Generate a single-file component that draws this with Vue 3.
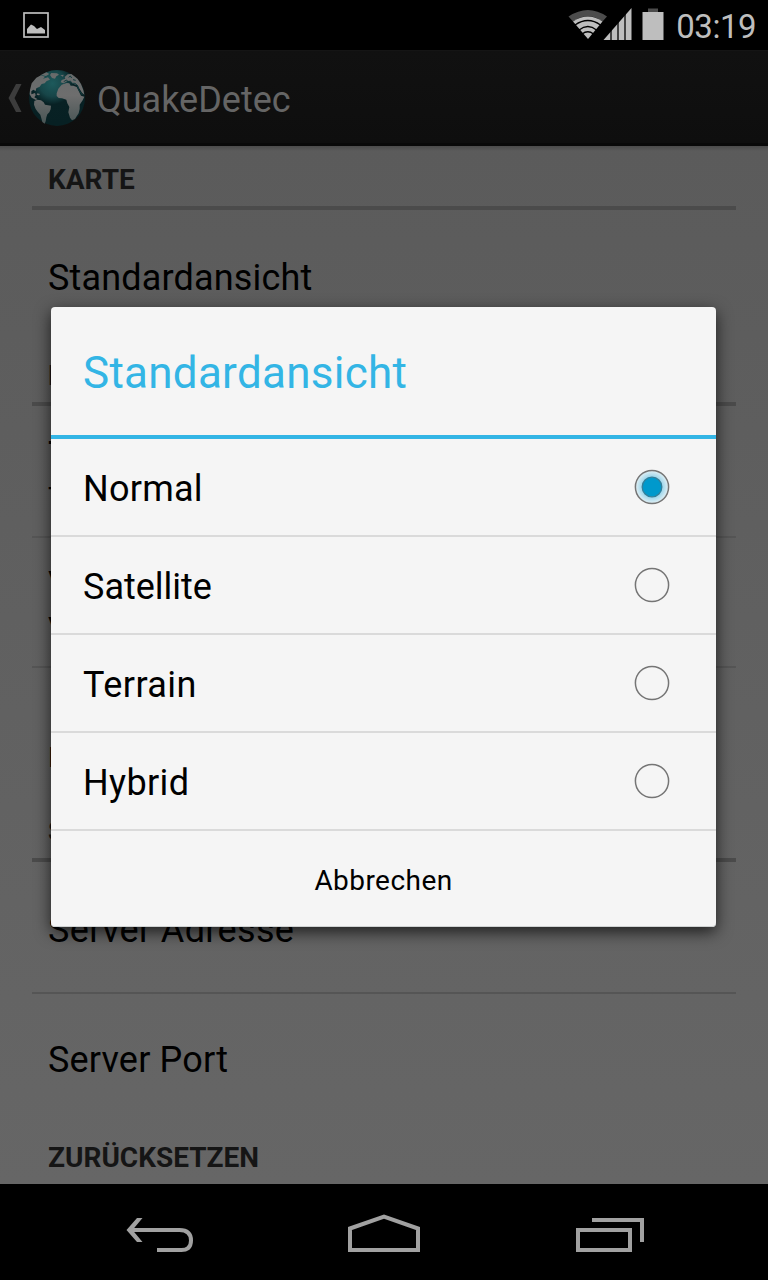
<script setup>
import { ref } from 'vue'

const options = ['Normal', 'Satellite', 'Terrain', 'Hybrid']
const selected = ref('Normal')

const sections = [
  { title: 'Karte', items: [{ title: 'Standardansicht' }] },
  {
    title: 'B',
    items: [
      { title: 'T', sub: 'T' },
      { title: 'V', sub: 'V' },
      { title: '\u00a0', sub: 'M' },
    ],
  },
  { title: 'S', items: [{ title: 'Server Adresse', wide: true }, { title: 'Server Port' }] },
  { title: 'Zurücksetzen', items: [] },
]
</script>

<template>
  <div class="screen">
    <header class="status">
      <svg class="picture" width="26" height="26" viewBox="0 0 26 26">
        <rect x="1" y="1" width="24" height="24" fill="none" stroke="#bebebe" stroke-width="1.700" />
        <path d="M4 21.500V17L8 12.500L11 14L14 17L18 15L22 18V21.500Z" fill="#bebebe" />
      </svg>
      <div class="indicators">
        <svg width="96" height="34" viewBox="0 0 96 34">
          <path d="M0.500 9.500Q20 -3.500 39 9.500L34.500 14.500Q20 4 5 14.500Z" fill="#4c4c4c" />
          <path d="M5 14.500Q20 4.500 34.500 14.500L20 32Z" fill="#bebebe" />
          <path d="M7 18Q20 9 32.500 18M11 23Q20 16 28.500 23M14 27Q20 22.500 25.500 27" fill="none" stroke="#000" stroke-width="1.300" />
          <path d="M35.500 33L63.500 1V33Z" fill="#bebebe" />
          <path d="M43 1V33M50 1V33M57 1V33" stroke="#000" stroke-width="1.300" />
          <path d="M80 1.500H90V5H80Z" fill="#4c4c4c" />
          <path d="M74.500 5H95.500V33H74.500Z" fill="#bebebe" />
        </svg>
        <span class="clock">03:19</span>
      </div>
    </header>

    <div class="actionbar">
      <svg class="up" width="14" height="28" viewBox="0 0 14 28">
        <path d="M8 0H13.500L6.500 14L13.500 28H8L0.500 14Z" fill="#3c3c3c" />
      </svg>
      <svg class="globe" width="56" height="56" viewBox="86 210 168 168">
        <defs>
          <radialGradient id="sea" cx="0.42" cy="0.24" r="0.72">
            <stop offset="0" stop-color="#1d5a5c" />
            <stop offset="0.32" stop-color="#174548" />
            <stop offset="0.52" stop-color="#082124" />
            <stop offset="1" stop-color="#072023" />
          </radialGradient>
          <linearGradient id="land" x1="0" y1="210" x2="0" y2="378" gradientUnits="userSpaceOnUse">
            <stop offset="0" stop-color="#666a6a" />
            <stop offset="0.45" stop-color="#6e6e6e" />
            <stop offset="1" stop-color="#465353" />
          </linearGradient>
        </defs>
        <circle cx="170" cy="294" r="84" fill="url(#sea)" />
        <g fill="url(#land)">
          <path d="M89 270L94 250L108 233L122 226L134 230L128 236L143 232L149 239L139 243L133 250L124 252L118 260L108 265L106 273L99 269L93 274L93 283L104 279L106 286L102 292L111 297L107 300L94 293L88 283Z" />
          <path d="M122 225L138 217L147 222L137 228ZM149 225L153 219L170 220L176 224L168 229L164 236L155 234ZM180 226L190 224L188 230ZM111 280L119 282L116 286L109 284Z" />
          <path d="M102 303L111 299L122 301L130 307L134 314L152 317L151 328L147 337L141 343L138 352L136 364L133 371L126 366L123 355L120 344L112 335L106 327L101 314Z" />
          <path d="M169 280L174 266L184 254L199 249L207 250L211 257L219 257L229 261L235 273L242 287L252 290L247 301L238 314L238 327L235 340L228 350L224 357L215 361L209 353L204 337L207 321L201 310L198 299L185 295L175 294L169 288Z" />
          <path d="M181 247L184 240L195 236L193 231L202 223L213 222L222 229L232 237L242 252L249 270L252 284L245 278L236 264L232 255L222 253L213 248L208 242L201 243L196 246L190 250Z" />
        </g>
        <path d="M190 245L199 240L204 247L210 243L216 250L224 250L231 256L235 269L246 285M205 232L210 228L214 234M218 239L226 241" fill="none" stroke="#123b3e" stroke-width="3" />
      </svg>
      <span class="app-name">QuakeDetec</span>
    </div>

    <main class="prefs">
      <section v-for="s in sections" :key="s.title" class="category">
        <h2>{{ s.title }}</h2>
        <div v-for="item in s.items" :key="item.title" class="pref">
          <div class="pref-title" :class="{ wide: item.wide }">{{ item.title }}</div>
          <div v-if="item.sub" class="pref-sub">{{ item.sub }}</div>
        </div>
      </section>
    </main>

    <nav class="navbar">
      <svg width="768" height="96" viewBox="0 0 768 96">
        <g fill="none" stroke="#a1a1a1" stroke-width="4">
          <path d="M130 46H179.500Q191 46 191 56.500T179.500 66H157" />
          <path d="M350 44.500L384 32.500L418 44.500V66H350Z" />
          <path d="M578 46H630V66H578ZM592 36H642V58" />
        </g>
        <path d="M137 34H142.500L132.500 46L142.500 58H137L126.500 46Z" fill="#a1a1a1" />
      </svg>
    </nav>

    <div class="dialog" role="dialog">
      <h1>Standardansicht</h1>
      <div v-for="o in options" :key="o" class="option" @click="selected = o">
        <span :class="o.toLowerCase()">{{ o }}</span>
        <svg width="36" height="36" viewBox="0 0 36 36">
          <defs>
            <radialGradient id="glow">
              <stop offset="0.55" stop-color="#92d2ea" />
              <stop offset="1" stop-color="#e4f0f4" />
            </radialGradient>
          </defs>
          <circle cx="18" cy="18" r="16.600" :fill="selected === o ? 'url(#glow)' : 'none'" stroke="#757575" stroke-width="1.500" />
          <circle v-if="selected === o" cx="18" cy="18" r="9.800" fill="#0099cc" stroke="#347f99" stroke-width="1.300" />
        </svg>
      </div>
      <button type="button">Abbrechen</button>
    </div>
  </div>
</template>

<style>
body { margin: 0; background: #000; }
</style>

<style scoped>
.screen {
  position: relative;
  width: 768px;
  height: 1280px;
  display: flex;
  flex-direction: column;
  overflow: hidden;
  background: #000;
  font-family: Roboto, "Liberation Sans", sans-serif;
  color: #000;
}
.status {
  height: 50px;
  flex: none;
  display: flex;
  justify-content: space-between;
  box-sizing: border-box;
  padding: 0 12px 0 23px;
}
.picture { margin-top: 12px; }
.indicators { display: flex; gap: 12px; padding-top: 7px; }
.clock { font-size: 33px; line-height: 39px; color: #bebebe; letter-spacing: -0.500px; }
.actionbar {
  height: 96px;
  flex: none;
  box-sizing: border-box;
  display: flex;
  align-items: center;
  padding: 2px 0 0 8px;
  border-top: 1px solid #151515;
  border-bottom: 3px solid #090909;
  background: linear-gradient(#111, #0e0e0e);
}
.globe { margin-left: 6.500px; }
.app-name { margin-left: 12.500px; padding-top: 3px; font-size: 36px; color: #656565; }
.prefs {
  height: 1038px;
  flex: none;
  overflow: hidden;
  box-sizing: border-box;
  padding: 0 32px;
  background: linear-gradient(#4b4b4b, transparent 5px), linear-gradient(#5b5b5b, #666);
}
h2 {
  margin: 0;
  height: 64px;
  box-sizing: border-box;
  padding: 3px 16px 0;
  border-bottom: 4px solid #4b4b4b;
  font-size: 28px;
  line-height: 62px;
  font-weight: 700;
  text-transform: uppercase;
  color: #151515;
}
.pref {
  height: 130px;
  box-sizing: border-box;
  padding: 2px 16px 0;
  display: flex;
  flex-direction: column;
  justify-content: center;
  border-bottom: 2px solid #555;
}
h2 + .pref { height: 132px; padding-top: 4px; }
.pref:last-child { border-bottom-color: transparent; }
.pref-title { font-size: 36px; line-height: 44px; padding-top: 2px; letter-spacing: 0.170px; }
.pref-title.wide { letter-spacing: 0.350px; }
.pref-sub { font-size: 28px; line-height: 38px; padding-top: 2px; margin-bottom: -2px; }
.navbar { height: 96px; flex: none; }
.navbar svg { display: block; }
.dialog {
  position: absolute;
  left: 51px;
  top: 307px;
  width: 665px;
  height: 620px;
  box-sizing: border-box;
  border-radius: 4px;
  background: #f5f5f5;
  box-shadow: 0 5px 16px rgba(0, 0, 0, 0.7), inset 0 -1px #cfd2d2;
}
h1 {
  margin: 0;
  height: 132px;
  box-sizing: border-box;
  padding: 2px 32px 0;
  border-bottom: 4px solid #33b5e5;
  color: #33b5e5;
  font-size: 44px;
  line-height: 128px;
  font-weight: 400;
  letter-spacing: 0.270px;
}
.option {
  height: 98px;
  box-sizing: border-box;
  padding: 0 46px 0 32px;
  display: flex;
  align-items: center;
  justify-content: space-between;
  border-bottom: 2px solid #dadada;
  font-size: 36px;
}
.option span { padding-top: 3px; }
.option .normal { letter-spacing: 0.250px; }
.option .terrain { letter-spacing: 0.450px; }
.option .hybrid { letter-spacing: 0.350px; }
button {
  display: block;
  width: 100%;
  height: 96px;
  padding: 3px 0 0;
  border: 0;
  background: transparent;
  font: 28px Roboto, "Liberation Sans", sans-serif;
  letter-spacing: 0.450px;
  color: #000;
}
</style>
